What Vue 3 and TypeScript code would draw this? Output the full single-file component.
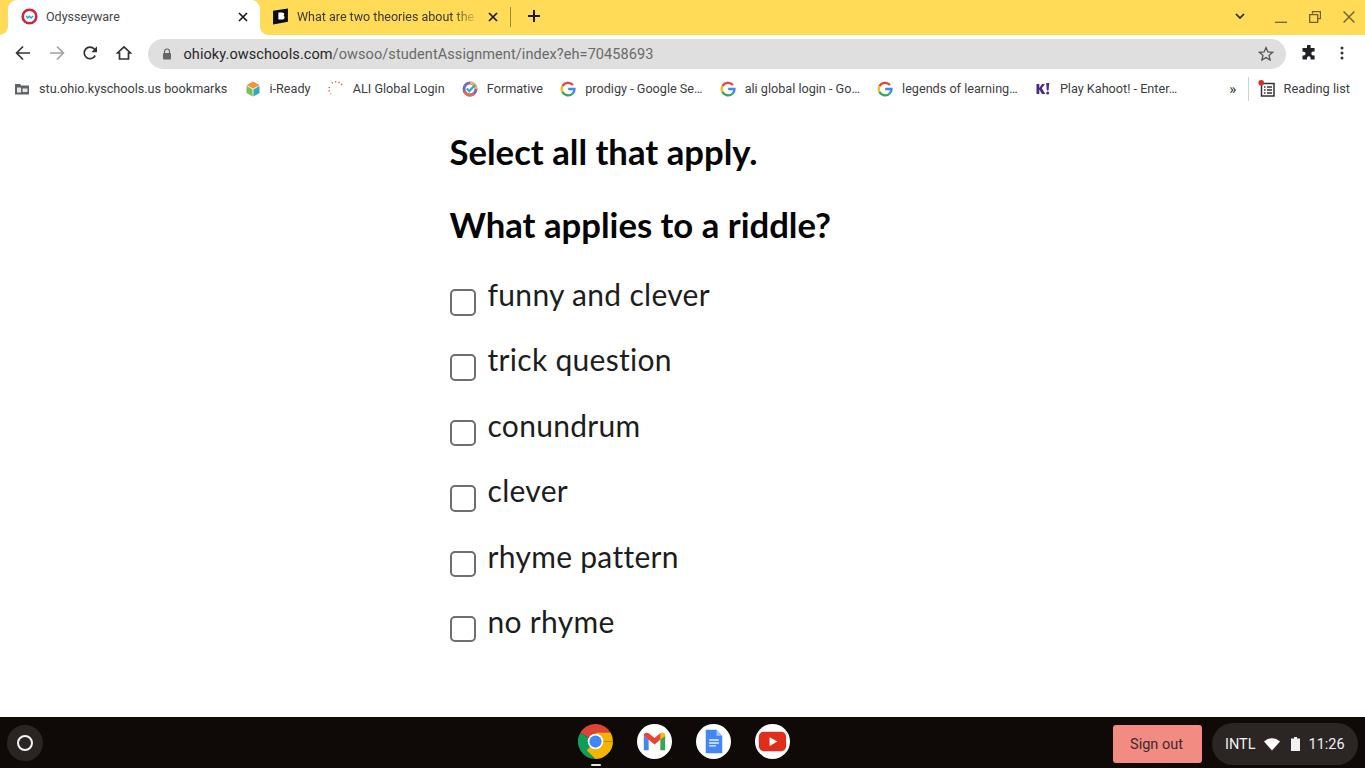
<script setup lang="ts">
const bookmarks: { id: string; text: string }[] = [
  { id: 'folder', text: 'stu.ohio.kyschools.us bookmarks' },
  { id: 'iready', text: 'i-Ready' },
  { id: 'ali', text: 'ALI Global Login' },
  { id: 'formative', text: 'Formative' },
  { id: 'g', text: 'prodigy - Google Se…' },
  { id: 'g', text: 'ali global login - Go…' },
  { id: 'g', text: 'legends of learning…' },
  { id: 'kahoot', text: 'Play Kahoot! - Enter…' },
]
const options: string[] = ['funny and clever', 'trick question', 'conundrum', 'clever', 'rhyme pattern', 'no rhyme']
</script>

<template>
  <div class="screen">
    <header class="tabstrip">
      <div class="tab active">
        <svg class="fav" viewBox="0 0 16 16" width="17" height="17">
          <circle cx="8" cy="8" r="6.4" fill="#fff" stroke="#d2233f" stroke-width="2.4" />
          <path d="M4.8 7.4l1.6 2 1.6-1.6 1.6 1.6 1.8-2" fill="none" stroke="#2a9fd6" stroke-width="1.3" />
        </svg>
        <span class="tab-title">Odysseyware</span>
        <svg class="close" viewBox="0 0 10 10" width="10" height="10"><path d="M1 1l8 8M9 1l-8 8" stroke="#1a1a1a" stroke-width="1.7" /></svg>
      </div>
      <div class="tab second">
        <svg class="fav" viewBox="0 0 16 16" width="17" height="17">
          <path d="M1 2.5L15 0.5V13L1 15.5Z" fill="#0c0c0c" />
          <path d="M6 4.3h3.4c1.5 0 2.1.7 2.1 1.7 0 .7-.4 1.2-1 1.4.8.2 1.3.8 1.3 1.6 0 1.2-.9 1.9-2.4 1.9H6Z" fill="#fff" />
        </svg>
        <span class="tab-title fade">What are two theories about the</span>
        <svg class="close" viewBox="0 0 10 10" width="10" height="10"><path d="M1 1l8 8M9 1l-8 8" stroke="#1a1a1a" stroke-width="1.7" /></svg>
      </div>
      <span class="tab-sep"></span>
      <svg class="newtab" viewBox="0 0 14 14" width="14" height="14"><path d="M7 1v12M1 7h12" stroke="#1c1a10" stroke-width="2" /></svg>
      <div class="strip-space"></div>
      <svg class="tabmenu" viewBox="0 0 10 6" width="10" height="6"><path d="M1 1l4 4 4-4" fill="none" stroke="#2a2410" stroke-width="1.7" /></svg>
      <div class="winctl">
        <svg viewBox="0 0 12 12" width="12" height="12"><path d="M0 11.3h12" stroke="#6f6232" stroke-width="1.3" /></svg>
        <svg viewBox="0 0 12 12" width="12" height="12"><path d="M3.5 2.7V.7h8v7h-2.4M.7 3.7h8v7.6h-8Z" fill="none" stroke="#6f6232" stroke-width="1.3" /></svg>
        <svg viewBox="0 0 12 12" width="12" height="12"><path d="M.6.6l10.8 10.8M11.4.6L.6 11.4" stroke="#6f6232" stroke-width="1.4" /></svg>
      </div>
    </header>

    <div class="toolbar">
      <svg class="tool" viewBox="0 0 16 16" width="16" height="16"><path d="M15 8H2M8 1.5L1.6 8 8 14.5" fill="none" stroke="#333" stroke-width="1.7" /></svg>
      <svg class="tool" viewBox="0 0 16 16" width="16" height="16"><path d="M1 8h13M8 1.5L14.4 8 8 14.5" fill="none" stroke="#a3a3a3" stroke-width="1.7" /></svg>
      <svg class="tool" viewBox="0 0 16 16" width="16" height="16"><path d="M13.2 10.5A5.800 5.800 0 1 1 12.300 4L14.500 6.300" fill="none" stroke="#333" stroke-width="1.7" /><path d="M15 1.300V7.200H9.300Z" fill="#333" /></svg>
      <svg class="tool" viewBox="0 0 16 16" width="16" height="16"><path d="M8 1.800L1.500 8H3.500V14H12.500V8H14.500Z" fill="none" stroke="#333" stroke-width="1.7" /></svg>
      <div class="omnibox">
        <svg class="lock" viewBox="0 0 10 12" width="10" height="12"><path d="M2.500 5V3.500a2.500 2.500 0 0 1 5 0V5" fill="none" stroke="#666" stroke-width="1.200" /><rect x="1" y="5" width="8" height="6.500" rx=".8" fill="#666" /></svg>
        <span class="url"><span class="host">ohioky.owschools.com</span>/owsoo/studentAssignment/index?eh=70458693</span>
        <svg class="star" viewBox="0 0 16 16" width="16" height="16"><path d="M8 1.600l1.900 4.300 4.700.4-3.600 3.100 1.100 4.600L8 11.600 3.900 14l1.100-4.600-3.600-3.100 4.700-.4Z" fill="none" stroke="#555" stroke-width="1.300" /></svg>
      </div>
      <svg class="puzzle" viewBox="0 0 16 16" width="16" height="16"><path d="M6 1.200a1.800 1.800 0 0 1 3.600 0V3h4v3.600h-1.400a1.900 1.900 0 0 0 0 3.800h1.400V14.500h-4v-1.400a1.800 1.800 0 0 0-3.600 0v1.400H1.500V10.500h1.200a1.900 1.900 0 0 0 0-3.800H1.500V3H6Z" fill="#202124" /></svg>
      <svg class="dots" viewBox="0 0 4 14" width="4" height="14"><circle cx="2" cy="2" r="1.500" fill="#333" /><circle cx="2" cy="7" r="1.500" fill="#333" /><circle cx="2" cy="12" r="1.500" fill="#333" /></svg>
    </div>

    <nav class="bookmarks">
      <div v-for="b in bookmarks" :key="b.text" class="bm">
        <svg class="bm-icon" viewBox="0 0 16 16" width="16" height="16">
          <template v-if="b.id === 'folder'">
            <path d="M1 3h5l1.300 1.500H15V13.500H1Z" fill="#5f6368" />
            <rect x="3" y="6.500" width="4" height="5" fill="#e8e8e8" /><rect x="8.500" y="7.500" width="5" height="3.500" fill="#e8e8e8" />
          </template>
          <template v-else-if="b.id === 'iready'">
            <path d="M8 .5l6.500 3.500L8 7.800 1.500 4Z" fill="#f0953a" />
            <path d="M1.500 4.800L7.600 8.500V15.500L1.500 12Z" fill="#79bf5d" />
            <path d="M14.500 4.800L8.400 8.500V15.500L14.500 12Z" fill="#3aa7b5" />
          </template>
          <template v-else-if="b.id === 'ali'">
            <path d="M14 4A7 7 0 0 0 3 3M1.500 6A7 7 0 0 0 3 13" fill="none" stroke="#d8553f" stroke-width="1.500" stroke-dasharray="1.200 2.200" />
          </template>
          <template v-else-if="b.id === 'formative'">
            <circle cx="8" cy="8" r="6" fill="none" stroke="#7b68b8" stroke-width="3" />
            <path d="M8 2a6 6 0 0 1 6 6" fill="none" stroke="#f3b63f" stroke-width="3" />
            <path d="M2.500 10.500A6 6 0 0 0 12 12.500" fill="none" stroke="#e8674f" stroke-width="3" />
            <path d="M4.800 7.500l2.600 2.600 5.500-6" fill="none" stroke="#35a3dd" stroke-width="2.200" />
          </template>
          <template v-else-if="b.id === 'g'">
            <path d="M13 4A6.500 6.500 0 0 0 2.400 5.200" fill="none" stroke="#ea4335" stroke-width="2.300" />
            <path d="M2.400 5.200a6.500 6.500 0 0 0 0 5.600" fill="none" stroke="#fbbc05" stroke-width="2.300" />
            <path d="M2.400 10.800A6.500 6.500 0 0 0 12.700 12.500" fill="none" stroke="#34a853" stroke-width="2.300" />
            <path d="M12.700 12.500A6.500 6.500 0 0 0 14.500 8H8.200" fill="none" stroke="#4285f4" stroke-width="2.300" />
          </template>
          <template v-else>
            <path d="M1.500 3h2.800v4L7 3h3L6.800 7.300 10.300 13H7L4.300 8.500V13H1.500Z" fill="#4b2a8c" />
            <path d="M11.200 2h3l-.6 7.500h-1.800Z" fill="#4b2a8c" /><circle cx="12.700" cy="12" r="1.500" fill="#4b2a8c" />
          </template>
        </svg>
        <span>{{ b.text }}</span>
      </div>
      <div class="strip-space"></div>
      <span class="more">»</span>
      <span class="bm-sep"></span>
      <span class="reading">
        <svg viewBox="0 0 18 18" width="18" height="18">
          <path d="M3.500 3.500h12.500v12.500H3.500Z" fill="none" stroke="#333" stroke-width="1.500" />
          <path d="M6 7h1.500M9 7h5M6 10h1.500M9 10h5M6 13h1.500M9 13h5" stroke="#333" stroke-width="1.400" />
          <circle cx="3.200" cy="2.800" r="2.800" fill="#d93025" />
        </svg>
        Reading list
      </span>
    </nav>

    <main class="page">
      <section class="question">
        <h2>Select all that apply.</h2>
        <h2 class="prompt">What applies to a riddle?</h2>
        <ul class="opts">
          <li v-for="o in options" :key="o">
            <span class="box"></span>
            <span class="opt-text">{{ o }}</span>
          </li>
        </ul>
      </section>
    </main>

    <footer class="shelf">
      <div class="launcher"><span class="ring"></span></div>
      <div class="apps">
        <span class="app chrome">
          <svg viewBox="0 0 36 36" width="35" height="35">
            <path d="M18 18L2.400 9A18 18 0 0 1 33.600 9Z" fill="#db4437" />
            <path d="M18 18L2.400 9A18 18 0 0 0 18 36Z" fill="#0f9d58" />
            <path d="M18 18H36A18 18 0 0 1 18 36L9 27Z" fill="#f4b400" />
            <path d="M18 9H33.600A18 18 0 0 1 36 18H24Z" fill="#f4b400" />
            <circle cx="18" cy="18" r="8" fill="#fff" /><circle cx="18" cy="18" r="6.300" fill="#4285f4" />
          </svg>
          <span class="running"></span>
        </span>
        <span class="app round">
          <svg viewBox="0 0 36 36" width="35" height="35">
            <circle cx="18" cy="18" r="18" fill="#fff" />
            <path d="M7 12v15h5V16Z" fill="#4285f4" /><path d="M24 16v11h5V12Z" fill="#34a853" />
            <path d="M7 12c0-3 3-3.800 5-2.500l6 5 6-5c2-1.300 5-.5 5 2.500l-11 9Z" fill="#ea4335" />
            <path d="M24 9.500c2-1.300 5-.5 5 2.500l-5 4Z" fill="#fbbc05" />
          </svg>
        </span>
        <span class="app round">
          <svg viewBox="0 0 36 36" width="35" height="35">
            <circle cx="18" cy="18" r="18" fill="#fff" />
            <path d="M10 6h11l6 6v18H10Z" fill="#4285f4" /><path d="M21 6v6h6Z" fill="#a1c2fa" />
            <path d="M13.500 16.500h10M13.500 19.500h10M13.500 22.500h7" stroke="#e8f0fe" stroke-width="1.500" />
          </svg>
        </span>
        <span class="app round">
          <svg viewBox="0 0 36 36" width="35" height="35">
            <circle cx="18" cy="18" r="18" fill="#fff" />
            <rect x="4" y="8" width="28" height="20" rx="5" fill="#e32d1c" />
            <path d="M15 13.500l8 4.500-8 4.500Z" fill="#fff" />
          </svg>
        </span>
      </div>
      <div class="tray-wrap">
        <button class="signout" type="button">Sign out</button>
        <div class="tray">
          <span>INTL</span>
          <svg class="wifi" viewBox="0 0 16 13" width="16" height="13"><path d="M0 3.500C4.500-1 11.500-1 16 3.500L8 12.500Z" fill="#fff" /></svg>
          <svg class="batt" viewBox="0 0 9 14" width="9" height="14"><path d="M3 0h3v1.500h3V14H0V1.500h3Z" fill="#f1f1f1" /></svg>
          <span class="time">11:26</span>
        </div>
      </div>
    </footer>
  </div>
</template>

<style>
html, body { margin: 0; overflow: hidden; background: #fff; }
</style>

<style scoped>
.screen { width: 1365px; height: 768px; display: flex; flex-direction: column; font-family: Roboto, "Liberation Sans", sans-serif; color: #202124; }
.tabstrip { height: 35px; background: #ffdb58; display: flex; align-items: center; flex: none; }
.tab { height: 35px; display: flex; align-items: center; box-sizing: border-box; font-size: 12.500px; position: relative; padding-bottom: 2px; }
.active { width: 252px; margin-left: 8px; padding-left: 13px; padding-right: 12px; background: #fff; border-radius: 9px 9px 0 0; }
.active::before, .active::after { content: ""; position: absolute; bottom: 0; width: 8px; height: 8px; background: radial-gradient(circle at 0 0, #ffdb58 7.5px, #fff 8px); }
.active::before { left: -8px; }
.active::after { right: -8px; transform: scaleX(-1); }
.second { width: 250px; padding-left: 12px; padding-right: 12px; }
.fav { flex: none; }
.tab-title { margin-left: 8px; flex: 1; white-space: nowrap; overflow: hidden; color: #3c3a2c; }
.active .tab-title { color: #45474a; }
.fade { -webkit-mask-image: linear-gradient(90deg, #000 85%, transparent 100%); mask-image: linear-gradient(90deg, #000 85%, transparent 100%); }
.close { flex: none; margin-left: 8px; }
.tab-sep { width: 1px; height: 20px; background: #9a8a45; flex: none; margin-left: 0; margin-bottom: 1px; }
.newtab { margin-left: 16px; flex: none; margin-bottom: 3px; }
.strip-space { flex: 1; }
.tabmenu { margin-right: 30px; flex: none; margin-bottom: 4px; }
.winctl { display: flex; gap: 22px; margin-right: 10px; align-items: center; margin-bottom: 2px; }
.toolbar { height: 36px; flex: none; display: flex; align-items: center; padding: 0 15px; background: #fff; box-sizing: border-box; }
.tool { flex: none; margin-right: 17.500px; }
.tool:nth-child(4) { margin-right: 16px; }
.omnibox { width: 1138px; height: 30px; background: #dfdfdf; border-radius: 15px; display: flex; align-items: center; padding: 0 12px 0 14px; box-sizing: border-box; flex: none; margin-top: 2px; }
.lock { flex: none; }
.url { margin-left: 12px; font-size: 14.500px; color: #6a6a6a; flex: 1; white-space: nowrap; letter-spacing: .08px; }
.host { color: #26282b; }
.puzzle { margin-left: 15px; flex: none; }
.dots { margin-left: 23px; flex: none; }
.bookmarks { height: 35px; flex: none; display: flex; align-items: center; padding: 0 15px 0 14px; gap: 17.200px; font-size: 12.650px; color: #3c4043; box-sizing: border-box; }
.bm { display: flex; align-items: center; gap: 9px; white-space: nowrap; }
.bm-icon { flex: none; }
.more { font-size: 15px; color: #333; margin-right: -5px; }
.bm-sep { width: 1px; height: 24px; background: #d0d0d0; margin-right: -9px; }
.reading { display: flex; align-items: center; gap: 8px; font-size: 12.800px; }
.page { flex: 1; background: #fff; display: flex; justify-content: center; min-height: 0; }
.question { width: 466px; box-sizing: border-box; padding-top: 23px; font-family: Lato, "Open Sans", sans-serif; }
h2 { margin: 0; font-size: 34.700px; line-height: 46px; font-weight: 700; color: #050505; }
.prompt { margin-top: 27px; }
.opts { list-style: none; margin: 25px 0 0; padding: 0; }
li { height: 65.400px; display: flex; gap: 12px; }
.box { width: 26px; height: 26.500px; box-sizing: border-box; border: 2px solid #6f6f6f; border-radius: 5px; margin-top: 16px; flex: none; background: #fff; }
.opt-text { font-size: 30px; line-height: 36px; color: #1d1d1d; letter-spacing: .3px; padding-top: 3px; }
.shelf { height: 51px; flex: none; background: #0f0a08; display: flex; align-items: center; position: relative; }
.launcher { width: 36px; height: 36px; margin-left: 7px; border-radius: 50%; background: #2a2523; display: flex; align-items: center; justify-content: center; }
.ring { width: 12px; height: 12px; border: 2px solid #f4f4f4; border-radius: 50%; }
.apps { position: absolute; left: 577.500px; top: 7px; display: flex; gap: 24px; }
.app { width: 35px; height: 36px; display: block; position: relative; }
.running { position: absolute; left: 13px; top: 40px; width: 10px; height: 2px; background: #e8e8e8; border-radius: 1px; }
.tray-wrap { margin-left: auto; display: flex; align-items: center; gap: 10px; margin-right: 7px; padding-top: 3px; }
.signout { width: 89px; height: 38px; background: #f28b82; border: 0; border-radius: 3px; font: 14.500px Roboto, sans-serif; color: #3c2a2a; padding: 0 2px 0 0; }
.tray { height: 42px; width: 146px; box-sizing: border-box; background: #2b2624; border-radius: 21px; display: flex; align-items: center; padding-left: 13px; color: #f1f1f1; font-size: 14.500px; }
.wifi { margin-left: 8px; }
.batt { margin-left: 11px; }
.time { margin-left: 9px; }
</style>
